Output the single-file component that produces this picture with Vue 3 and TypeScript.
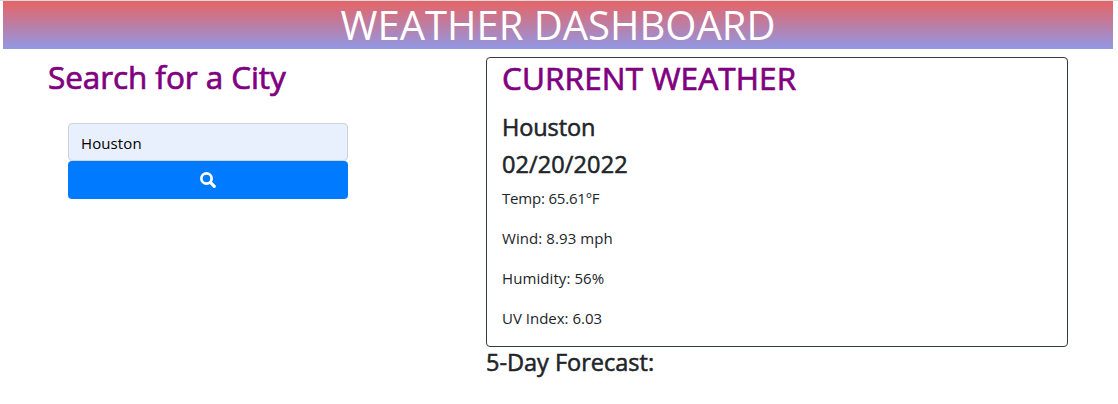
<script setup lang="ts">
import { ref } from 'vue'

interface Reading {
  key: string
  label: string
  value: string
}

const city = ref('Houston')
const date = '02/20/2022'
const readings: Reading[] = [
  { key: 'temp', label: 'Temp', value: '65.61°F' },
  { key: 'wind', label: 'Wind', value: '8.93 mph' },
  { key: 'humidity', label: 'Humidity', value: '56%' },
  { key: 'uv', label: 'UV Index', value: '6.03' },
]
</script>

<template>
  <div class="page">
    <header class="banner">
      <h1>WEATHER DASHBOARD</h1>
    </header>
    <main class="content">
      <section class="search">
        <h2>Search for a City</h2>
        <form class="search-form" @submit.prevent>
          <input v-model="city" type="text" aria-label="City" />
          <button type="submit" aria-label="Search">
            <svg viewBox="0 0 16 16" width="16" height="16">
              <circle cx="6.5" cy="6.5" r="5.15" fill="none" stroke="currentColor" stroke-width="2.7" />
              <path d="M10.600 10.600L14.300 14.300" stroke="currentColor" stroke-width="3.1" stroke-linecap="round" />
            </svg>
          </button>
        </form>
      </section>
      <section class="results">
        <div class="card">
          <h2>CURRENT WEATHER</h2>
          <h4 class="city">Houston</h4>
          <h4 class="date">{{ date }}</h4>
          <p v-for="r in readings" :key="r.key" :class="r.key">{{ r.label }}: {{ r.value }}</p>
        </div>
        <h4 class="forecast">5-Day Forecast:</h4>
      </section>
    </main>
  </div>
</template>

<style>
body {
  margin: 0;
  background: #fff;
}
</style>

<style scoped>
.page {
  box-sizing: border-box;
  height: 404px;
  border-top: 1px solid #dadce0;
  padding: 0 5px 0 3px;
  color: #212529;
  font-family: 'Open Sans', 'Noto Sans', sans-serif;
  font-size: 15px;
  line-height: 24px;
}
h1,
h2,
h4,
p {
  margin: 0;
  white-space: nowrap;
}
.banner {
  height: 48px;
  background: linear-gradient(#e66465, #9198e5);
  color: #fff;
  text-align: center;
}
.banner h1 {
  font-size: 40px;
  font-weight: 400;
  line-height: 48px;
}
.content {
  display: flex;
}
.search {
  box-sizing: border-box;
  width: 483px;
  padding: 9px 0 0 45px;
}
h2 {
  color: purple;
  font-size: 31.5px;
  font-weight: 500;
  line-height: 38px;
  -webkit-text-stroke: 0.7px currentColor;
}
.search h2 {
  letter-spacing: -0.08px;
}
.card h2 {
  letter-spacing: 0.12px;
}
.search-form {
  width: 280px;
  margin: 27px 0 0 20px;
}
input {
  display: block;
  box-sizing: border-box;
  width: 100%;
  height: 38px;
  padding: 6px 12px 4px;
  border: 1px solid #ced4da;
  border-radius: 4px;
  background: #e8f0fe;
  color: #000;
  font: inherit;
  letter-spacing: 0.1px;
  outline: 0;
}
button {
  display: flex;
  align-items: center;
  justify-content: center;
  width: 100%;
  height: 38px;
  padding: 0;
  border: 0;
  border-radius: 4px;
  background: #007bff;
  color: #fff;
}
.card {
  box-sizing: border-box;
  width: 582px;
  height: 290px;
  margin-top: 8px;
  padding: 1px 15px 0;
  border: 1px solid #343a40;
  border-radius: 4px;
}
h4 {
  font-size: 23.5px;
  font-weight: 500;
  line-height: 29px;
  -webkit-text-stroke: 0.55px currentColor;
}
.city {
  margin-top: 16px;
  letter-spacing: -0.1px;
}
.date {
  margin: 8px 0 7px;
  letter-spacing: 0.1px;
}
p {
  margin-bottom: 16px;
}
.temp {
  letter-spacing: -0.2px;
}
.wind,
.humidity {
  letter-spacing: 0.08px;
}
.forecast {
  margin-top: 1px;
}
</style>
